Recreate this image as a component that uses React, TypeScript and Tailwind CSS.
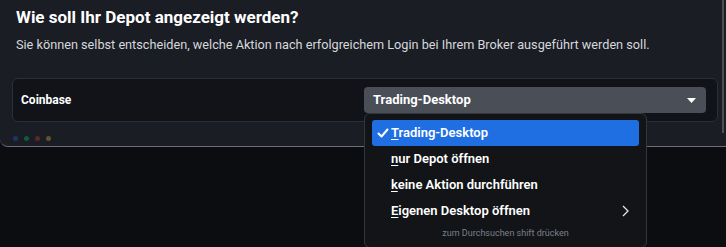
import React from "react";

const OPTIONS = [
  { id: "trading", first: "T", rest: "rading-Desktop", selected: true },
  { id: "depot", first: "n", rest: "ur Depot öffnen" },
  { id: "none", first: "k", rest: "eine Aktion durchführen" },
  { id: "custom", first: "E", rest: "igenen Desktop öffnen", submenu: true },
];

function Check() {
  return (
    <svg width="12" height="12" viewBox="0 0 12 12" className="shrink-0">
      <path d="M1.5 6.5 L4.5 9.5 L10.5 2.5" fill="none" stroke="white" strokeWidth="2" strokeLinecap="round" strokeLinejoin="round" />
    </svg>
  );
}

export default function App() {
  return (
    <div className="relative h-[247px] w-[726px] overflow-hidden bg-[#0b0d10] font-['Roboto',sans-serif] text-white">
      <div className="relative h-[147px] rounded-bl-[8px] border-b border-[#6b6f77] bg-[#1a1d24] pl-[12px] pr-[8px]">
        <div className="absolute right-[2px] top-0 h-[133px] w-[2px] bg-[#4a4e56]" />
        <h1 className="pl-[4px] pt-[5px] text-[17px] font-bold leading-[24px] text-white">
          Wie soll Ihr Depot angezeigt werden?
        </h1>
        <p className="mt-[7px] pl-[4px] text-[12.7px] leading-[18px] text-[#d6d8dc]">
          Sie können selbst entscheiden, welche Aktion nach erfolgreichem Login bei Ihrem Broker ausgeführt werden soll.
        </p>
        <div className="mt-[24px] flex h-[44px] items-center rounded-[6px] border border-[#2c2f36] bg-[#111318] pl-[8px] pr-[11px]">
          <span className="flex-1 text-[12px] font-bold">Coinbase</span>
          <div className="flex h-[26px] w-[342px] items-center justify-between rounded-[4px] bg-[#4a4e57] pl-[9px] pr-[10px]">
            <span className="text-[13px] font-bold">Trading-Desktop</span>
            <svg width="9" height="5" viewBox="0 0 9 5">
              <path d="M0 0 H9 L4.5 5 Z" fill="white" />
            </svg>
          </div>
        </div>
        <div className="mt-[14px] flex gap-[6px] pl-[1px]">
          <span className="h-[5px] w-[5px] rounded-full bg-[#1c3566]" />
          <span className="h-[5px] w-[5px] rounded-full bg-[#0f5a40]" />
          <span className="h-[5px] w-[5px] rounded-full bg-[#5a2631]" />
          <span className="h-[5px] w-[5px] rounded-full bg-[#61522d]" />
        </div>
      </div>

      <div className="absolute left-[364px] top-[113px] w-[283px] rounded-[6px] border border-[#33363d] bg-[#121418] px-[7px] pt-[6px] pb-[8px]">
        {OPTIONS.map((o) => (
          <div
            key={o.id}
            className={`flex h-[26px] items-center rounded-[3px] pl-[5px] pr-[10px] ${o.selected ? "bg-[#1f6fe3]" : ""}`}
          >
            <span className="flex w-[14px] items-center">{o.selected ? <Check /> : null}</span>
            <span className="flex-1 text-[13px] font-semibold">
              <span className="underline underline-offset-2">{o.first}</span>
              {o.rest}
            </span>
            {o.submenu ? (
              <svg width="7" height="12" viewBox="0 0 7 12">
                <path d="M1 1 L6 6 L1 11" fill="none" stroke="#e5e7eb" strokeWidth="1.3" />
              </svg>
            ) : null}
          </div>
        ))}
        <div className="pt-[3px] text-center text-[9px] leading-[12px] text-[#7c8089]">zum Durchsuchen shift drücken</div>
      </div>
    </div>
  );
}
